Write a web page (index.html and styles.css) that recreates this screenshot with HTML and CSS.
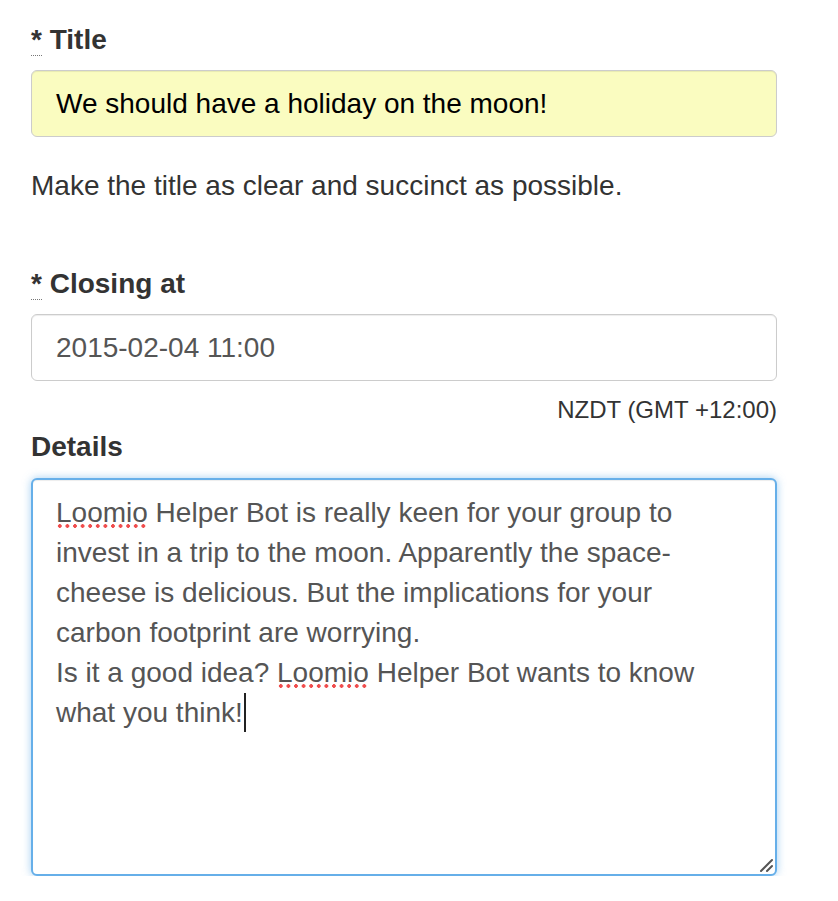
FILE: index.html
```html
<!DOCTYPE html>
<html>
<head>
<meta charset="utf-8">
<link rel="stylesheet" href="styles.css">
</head>
<body>
<form class="form">
  <div class="group">
    <label class="label"><abbr class="req" title="required">*</abbr> Title</label>
    <div class="input input-filled">We should have a holiday on the moon!</div>
    <p class="help">Make the title as clear and succinct as possible.</p>
  </div>
  <div class="group group-closing">
    <label class="label"><abbr class="req" title="required">*</abbr> Closing at</label>
    <div class="input input-muted">2015-02-04 11:00</div>
    <div class="tz">NZDT (GMT +12:00)</div>
  </div>
  <div class="group">
    <label class="label">Details</label>
    <div class="textarea"><span class="misspelt">Loomio</span> Helper Bot is really keen for your group to<br>invest in a trip to the moon. Apparently the space-<br>cheese is delicious. But the implications for your<br>carbon footprint are worrying.<br>Is it a good idea? <span class="misspelt">Loomio</span> Helper Bot wants to know<br>what you think!<span class="caret"></span><svg class="grip" width="14" height="14" viewBox="0 0 14 14"><path d="M13 2 L2 13 M13 8 L8 13" stroke="#555" stroke-width="2" stroke-linecap="round" fill="none"/></svg></div>
  </div>
</form>
</body>
</html>
```
FILE: styles.css
```css
html, body {
  margin: 0;
  padding: 0;
  background: #fff;
}
body {
  font-family: "Liberation Sans", Arial, Helvetica, sans-serif;
  font-size: 28px;
  line-height: 40px;
  color: #333;
}
.form {
  width: 746px;
  padding: 20px 0 0 31px;
}
.group {
  display: flex;
  flex-direction: column;
}
.label {
  font-weight: bold;
  color: #333;
  margin-bottom: 10px;
}
.req {
  text-decoration: none;
  border-bottom: 1px dotted #777;
  cursor: help;
}
.input {
  box-sizing: border-box;
  height: 67px;
  padding: 0 24px;
  line-height: 65px;
  border: 1px solid #ccc;
  border-radius: 6px;
  box-shadow: inset 0 1px 1px rgba(0,0,0,0.075);
  background: #fff;
}
.input-filled {
  background: #fafcc0;
  color: #000;
}
.input-muted {
  color: #555;
}
.help {
  margin: 29px 0 58px;
  color: #333;
}
.tz {
  text-align: right;
  font-size: 24px;
  line-height: 34px;
  margin-top: 12px;
  color: #333;
}
.textarea {
  position: relative;
  box-sizing: border-box;
  height: 398px;
  margin-top: 1px;
  padding: 13px 23px 10px;
  border: 2px solid #66afe9;
  border-radius: 6px;
  box-shadow: inset 0 1px 1px rgba(0,0,0,0.075), 0 0 8px rgba(102,175,233,0.6);
  color: #555;
  background: #fff;
}
.misspelt {
  background-image: radial-gradient(circle, #f04d4d 1.7px, transparent 2.1px);
  background-size: 7.6px 4px;
  background-repeat: repeat-x;
  background-position: 0 100%;
}
.caret {
  display: inline-block;
  width: 0;
  height: 39px;
  border-left: 2px solid #222;
  vertical-align: -10px;
  margin-left: 1px;
}
.grip {
  position: absolute;
  right: 2px;
  bottom: 2px;
}
```
